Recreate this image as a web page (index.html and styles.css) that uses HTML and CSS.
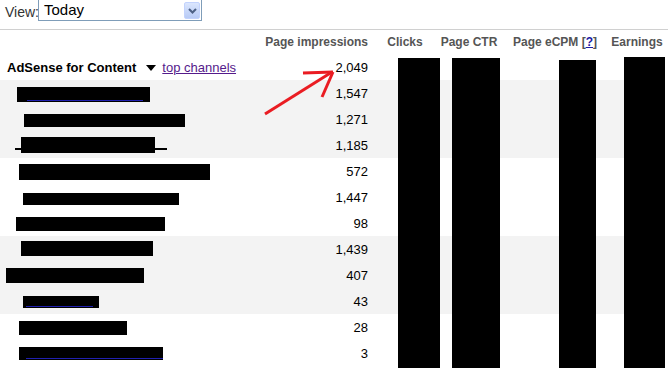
FILE: index.html
```html
<!DOCTYPE html>
<html>
<head>
<meta charset="utf-8">
<link rel="stylesheet" href="styles.css">
</head>
<body>
<div class="page">
  <div class="viewbar">
    <span class="view-label">View:</span>
    <div class="select">
      <span class="select-text">Today</span>
      <span class="select-btn">
        <svg width="9" height="6" viewBox="0 0 9 6"><path d="M1 1 L4.5 4.5 L8 1" fill="none" stroke="#4d6185" stroke-width="2"/></svg>
      </span>
    </div>
  </div>
  <div class="report">
    <table class="grid">
      <colgroup>
        <col class="c-name"><col class="c-imp"><col class="c-clk"><col class="c-ctr"><col class="c-ecpm"><col class="c-earn">
      </colgroup>
      <thead>
        <tr class="head">
          <th></th>
          <th class="num">Page impressions</th>
          <th>Clicks</th>
          <th>Page CTR</th>
          <th>Page eCPM <span class="help">[<a href="#">?</a>]</span></th>
          <th>Earnings</th>
        </tr>
      </thead>
      <tbody>
        <tr class="top">
          <td class="name"><b>AdSense for Content</b><span class="tri"></span><a class="visited" href="#">top channels</a></td>
          <td class="num">2,049</td><td></td><td></td><td></td><td></td>
        </tr>
        <tr class="alt">
          <td class="name"><span class="redact" style="margin-left:17px;width:133px;height:15px;margin-top:1px"></span><span class="uline" style="margin-left:27px;width:116px"></span></td>
          <td class="num">1,547</td><td></td><td></td><td></td><td></td>
        </tr>
        <tr class="alt">
          <td class="name"><span class="redact" style="margin-left:24px;width:161px;height:13px;margin-top:2px"></span></td>
          <td class="num">1,271</td><td></td><td></td><td></td><td></td>
        </tr>
        <tr class="alt">
          <td class="name"><span class="redact" style="margin-left:21px;width:134px;height:16px;margin-top:0px"></span><span class="dash" style="margin-left:15px;width:152px"></span></td>
          <td class="num">1,185</td><td></td><td></td><td></td><td></td>
        </tr>
        <tr>
          <td class="name"><span class="redact" style="margin-left:19px;width:191px;height:16px;margin-top:1px"></span></td>
          <td class="num">572</td><td></td><td></td><td></td><td></td>
        </tr>
        <tr>
          <td class="name"><span class="redact" style="margin-left:23px;width:156px;height:12px;margin-top:3px"></span></td>
          <td class="num">1,447</td><td></td><td></td><td></td><td></td>
        </tr>
        <tr>
          <td class="name"><span class="redact" style="margin-left:16px;width:149px;height:14px;margin-top:2px"></span></td>
          <td class="num">98</td><td></td><td></td><td></td><td></td>
        </tr>
        <tr class="alt">
          <td class="name"><span class="redact" style="margin-left:21px;width:132px;height:15px;margin-top:-1px"></span></td>
          <td class="num">1,439</td><td></td><td></td><td></td><td></td>
        </tr>
        <tr class="alt">
          <td class="name"><span class="redact" style="margin-left:6px;width:138px;height:15px;margin-top:1px"></span></td>
          <td class="num">407</td><td></td><td></td><td></td><td></td>
        </tr>
        <tr class="alt">
          <td class="name"><span class="redact" style="margin-left:23px;width:76px;height:12px;margin-top:1px"></span><span class="uline" style="margin-left:26px;width:67px"></span></td>
          <td class="num">43</td><td></td><td></td><td></td><td></td>
        </tr>
        <tr>
          <td class="name"><span class="redact" style="margin-left:19px;width:108px;height:14px;margin-top:2px"></span></td>
          <td class="num">28</td><td></td><td></td><td></td><td></td>
        </tr>
        <tr>
          <td class="name"><span class="redact" style="margin-left:19px;width:144px;height:13px;margin-top:0px"></span><span class="uline" style="margin-left:26px;width:137px"></span></td>
          <td class="num">3</td><td></td><td></td><td></td><td></td>
        </tr>
      </tbody>
    </table>
    <div class="bar bar-clk"></div>
    <div class="bar bar-ctr"></div>
    <div class="bar bar-ecpm"></div>
    <div class="bar bar-earn"></div>
    <svg class="arrow" width="668" height="140" viewBox="0 0 668 140">
      <g fill="none" stroke="#ea1c22" stroke-width="3" stroke-linecap="butt">
        <path d="M265 84 L332 42"/>
        <path d="M303 43 L333 42"/>
        <path d="M333 42 L322 67"/>
      </g>
    </svg>
  </div>
</div>
</body>
</html>
```
FILE: styles.css
```css
html, body {
  margin: 0;
  padding: 0;
  background: #fff;
}
body {
  font-family: "Liberation Sans", Arial, sans-serif;
  font-size: 13px;
  color: #000;
  width: 668px;
  height: 368px;
  overflow: hidden;
}
.page {
  width: 668px;
}
.viewbar {
  display: flex;
  align-items: flex-start;
  border-bottom: 1px solid #d0d0d0;
  box-sizing: border-box;
  height: 30px;
}
.view-label {
  font-size: 14px;
  color: #333;
  margin: 4px 0 0 5px;
  width: 33px;
}
.select {
  display: flex;
  align-items: center;
  justify-content: space-between;
  width: 164px;
  height: 22px;
  margin-top: -1px;
  border: 1px solid #7f9db9;
  box-sizing: border-box;
  background: #fff;
}
.select-text {
  font-size: 15px;
  padding-left: 5px;
  color: #000;
  line-height: 18px;
}
.select-btn {
  display: flex;
  align-items: center;
  justify-content: center;
  width: 16px;
  height: 17px;
  margin-right: 1px;
  margin-top: 1px;
  background: linear-gradient(#dbe6fd, #b8cbf6);
  border: 1px solid #c3d3fd;
  box-sizing: border-box;
  border-radius: 2px;
}
.report {
  position: relative;
  height: 338px;
}
.grid {
  border-collapse: collapse;
  table-layout: fixed;
  width: 664px;
}
.c-name { width: 262px; }
.c-imp { width: 110px; }
.c-clk { width: 66px; }
.c-ctr { width: 62px; }
.c-ecpm { width: 110px; }
.c-earn { width: 54px; }
.grid td, .grid th {
  padding: 0;
  vertical-align: middle;
}
.head th {
  height: 25px;
  font-size: 12px;
  font-weight: bold;
  color: #555;
  text-align: center;
  padding-bottom: 2px;
  box-sizing: border-box;
  white-space: nowrap;
}
.head th.num {
  text-align: right;
  padding-right: 4px;
}
.help a {
  color: #1a1aa6;
  text-decoration: underline;
}
.grid tbody tr {
  height: 26px;
}
.grid tbody tr.top {
  height: 25px;
}
.grid tbody tr.alt td {
  background: #f3f3f3;
}
td.num {
  text-align: right;
  padding-right: 4px;
  font-size: 13px;
}
td.name {
  white-space: nowrap;
}
.top td.name {
  padding-left: 7px;
}
.top b {
  font-size: 13px;
}
.tri {
  display: inline-block;
  width: 0;
  height: 0;
  border-left: 5px solid transparent;
  border-right: 5px solid transparent;
  border-top: 6px solid #000;
  margin: 0 6px 1px 10px;
  vertical-align: middle;
}
a.visited {
  color: #551a8b;
  text-decoration: underline;
}
.redact {
  display: block;
  background: #000;
}
.uline {
  display: block;
  height: 1px;
  margin-top: -2px;
  background: #2020b0;
}
.dash {
  display: block;
  height: 2px;
  margin-top: -5px;
  margin-bottom: 3px;
  background: #000;
}
.bar {
  position: absolute;
  bottom: 0;
  background: #000;
}
.bar-clk { left: 398px; width: 42px; top: 28px; }
.bar-ctr { left: 452px; width: 48px; top: 28px; }
.bar-ecpm { left: 559px; width: 37px; top: 30px; }
.bar-earn { left: 624px; width: 41px; top: 27px; }
.arrow {
  position: absolute;
  left: 0;
  top: 0;
  pointer-events: none;
}
```
